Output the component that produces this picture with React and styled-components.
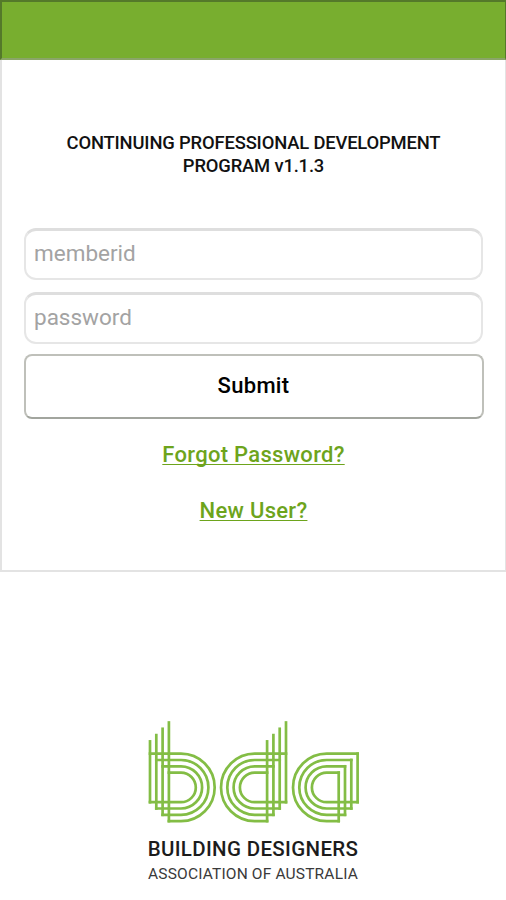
import React, { useState } from 'react';

import styled, { createGlobalStyle } from 'styled-components';

// one entry per parallel line, outermost bowl first
const LINES = [0, 1, 2, 3];
const GAP = 6.3;
const RADIUS = 33.7;
const TOP = 33.7;
const BOTTOM = 101.1;

const bowl = (index, center, fromX, toX, sweep) => {
  const r = RADIUS - index * GAP;
  return `M${fromX} ${TOP + index * GAP}H${center}A${r} ${r} 0 0 ${sweep} ${center} ${
    BOTTOM - index * GAP
  }H${toX}`;
};

function BdaLogo() {
  return (
    <LogoMark viewBox="0 0 212 104" aria-label="bda">
      {LINES.map(i => (
        <g key={i}>
          <path d={bowl(i, 34, 3 + i * GAP, 21.9 - i * GAP, 1)} />
          <path d={`M${3 + i * GAP} ${21.4 - i * GAP}V${82.2 + i * GAP}`} />

          <path d={bowl(i, 107.7, 139 - i * GAP, 120.1 + i * GAP, 0)} />
          <path d={`M${139 - i * GAP} ${2.5 + i * GAP}V${82.2 + i * GAP}`} />

          <path d={bowl(i, 179.7, 210.6 - i * GAP, 191.7 + i * GAP, 0)} />
          <path d={`M${210.6 - i * GAP} ${TOP + i * GAP}V${82.2 + i * GAP}`} />
        </g>
      ))}
    </LogoMark>
  );
}

export default function App() {
  const [member, setMember] = useState({ memberid: '', password: '' });

  const handleChange = event => {
    const { name, value } = event.target;
    setMember({ ...member, [name]: value });
  };

  return (
    <Page>
      <GlobalStyle />
      <TopBar />
      <LoginPanel onSubmit={event => event.preventDefault()}>
        <Title>
          CONTINUING PROFESSIONAL DEVELOPMENT
          <br />
          PROGRAM v1.1.3
        </Title>
        <Field
          name="memberid"
          placeholder="memberid"
          value={member.memberid}
          onChange={handleChange}
        />
        <Field
          name="password"
          type="password"
          placeholder="password"
          value={member.password}
          onChange={handleChange}
        />
        <SubmitButton type="submit">Submit</SubmitButton>
        <PanelLink href="#forgot">Forgot Password?</PanelLink>
        <PanelLink href="#new">New User?</PanelLink>
      </LoginPanel>
      <Brand>
        <BdaLogo />
        <BrandName>BUILDING DESIGNERS</BrandName>
        <BrandSub>ASSOCIATION OF AUSTRALIA</BrandSub>
      </Brand>
    </Page>
  );
}

const GlobalStyle = createGlobalStyle`
  * {
    box-sizing: border-box;
  }

  body {
    margin: 0;
    background: #fff;
    font-family: Roboto, sans-serif;
  }
`;

const Page = styled.main`
  display: flex;
  flex-direction: column;
  width: 506px;
  height: 900px;
  overflow: hidden;
  background: #fff;
`;

const TopBar = styled.header`
  height: 60px;
  border: 2px solid #54792a;
  border-right-width: 1px;
  border-bottom: 2px solid #8aa568;
  background: #78ae2f;
`;

const LoginPanel = styled.form`
  display: flex;
  flex-direction: column;
  align-items: center;
  height: 512px;
  padding: 71px 22px 0;
  border: 2px solid #e3e3e3;
  border-top: 0;
  border-right-width: 1px;
`;

const Title = styled.h1`
  margin: 0 0 51px;
  color: #111;
  font-size: 18.4px;
  font-weight: 500;
  line-height: 23px;
  letter-spacing: -0.17px;
  text-align: center;
  white-space: nowrap;
`;

const Field = styled.input`
  width: 459px;
  height: 52px;
  margin-bottom: 12px;
  padding: 0 8px 4px;
  border: 2px solid #e6e6e6;
  border-top: 3px solid #dedede;
  border-radius: 12px;
  outline: none;
  background: #fff;
  color: #222;
  font-family: inherit;
  font-size: 22.5px;

  &::placeholder {
    color: #a3a3a3;
    opacity: 1;
  }
`;

const SubmitButton = styled.button`
  width: 460px;
  height: 65px;
  margin: -2px 0 23px;
  padding: 0 0 3px;
  border: 2px solid #bfc0ba;
  border-bottom-color: #a2a59e;
  border-radius: 8px;
  background: #fff;
  color: #000;
  font-family: inherit;
  font-size: 22px;
  font-weight: 500;
  letter-spacing: 0.3px;
`;

const PanelLink = styled.a`
  margin-bottom: 30px;
  color: #6da41c;
  font-size: 22px;
  font-weight: 500;
  line-height: 26px;
  letter-spacing: 0.3px;
  text-decoration: underline;
  text-decoration-thickness: 1px;
  text-decoration-skip-ink: none;
  text-underline-offset: 2px;
`;

const Brand = styled.footer`
  display: flex;
  flex-direction: column;
  align-items: center;
  padding-top: 148px;
`;

const LogoMark = styled.svg`
  display: block;
  width: 212px;
  height: 104px;
  fill: none;
  stroke: #83bd45;
  stroke-width: 2.7;
  stroke-linecap: square;
`;

const BrandName = styled.div`
  margin-top: 13px;
  color: #1c1c1c;
  font-size: 20.5px;
  font-weight: 500;
  line-height: 24px;
  letter-spacing: 0.33px;
  white-space: nowrap;
`;

const BrandSub = styled.div`
  margin-top: 2px;
  color: #3a3a3a;
  font-size: 15.5px;
  line-height: 22px;
  letter-spacing: 0.17px;
  white-space: nowrap;
`;
